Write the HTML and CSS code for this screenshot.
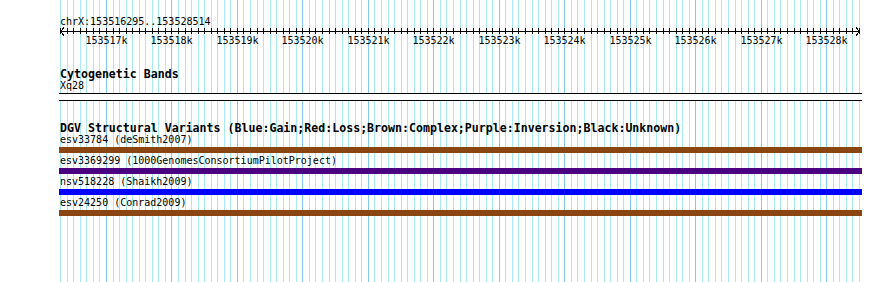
FILE: index.html
```html
<!DOCTYPE html>
<html lang="en">
<head>
  <meta charset="UTF-8">
  <title>chrX:153516295..153528514</title>
  <link rel="stylesheet" href="styles.css">
</head>
<body>
  <div class="panel">
    <svg class="grid" id="grid" width="890" height="282"></svg>

    <div class="track ruler">
      <div class="seg">chrX:153516295..153528514</div>
      <svg class="scale" id="scale" width="890" height="24"></svg>
    </div>

    <div class="track bands">
      <div class="title">Cytogenetic Bands</div>
      <div class="label">Xq28</div>
      <div class="band"></div>
    </div>

    <div class="track dgv">
      <div class="title">DGV Structural Variants (Blue:Gain;Red:Loss;Brown:Complex;Purple:Inversion;Black:Unknown)</div>
      <div class="feature">
        <div class="label">esv33784 (deSmith2007)</div>
        <div class="bar complex"></div>
      </div>
      <div class="feature">
        <div class="label">esv3369299 (1000GenomesConsortiumPilotProject)</div>
        <div class="bar inversion"></div>
      </div>
      <div class="feature">
        <div class="label">nsv518228 (Shaikh2009)</div>
        <div class="bar gain"></div>
      </div>
      <div class="feature">
        <div class="label">esv24250 (Conrad2009)</div>
        <div class="bar complex"></div>
      </div>
    </div>
  </div>

  <script>
    var start = 153516295, end = 153528514;
    var x0 = 59.8, k = 0.06548;
    var ns = 'http://www.w3.org/2000/svg';

    function px(p) {
      return Math.round(x0 + (p - start) * k) + 0.5;
    }

    function add(parent, tag, attrs, text) {
      var el = document.createElementNS(ns, tag);
      for (var a in attrs) el.setAttribute(a, attrs[a]);
      if (text) el.textContent = text;
      parent.appendChild(el);
      return el;
    }

    var grid = document.getElementById('grid');
    var scale = document.getElementById('scale');

    // grid lines every 100bp, darker every 1kb
    for (var p = 153516300; p <= end; p += 100) {
      var x = px(p);
      var major = p % 1000 === 0;
      add(grid, 'line', { x1: x, x2: x, y1: 0, y2: 282, 'class': major ? 'major' : 'minor' });
      add(scale, 'line', { x1: x, x2: x, y1: 1, y2: 7, 'class': 'tick' });
      if (major) {
        add(scale, 'text', { x: x, y: 17, 'class': 'ticklabel' }, (p / 1000) + 'k');
      }
    }

    add(scale, 'line', { x1: 60, x2: 860, y1: 4.5, y2: 4.5, 'class': 'axis' });
    add(scale, 'polyline', { points: '64,0.5 60.5,4.5 64,8.5', 'class': 'axis' });
    add(scale, 'polyline', { points: '856,0.5 859.5,4.5 856,8.5', 'class': 'axis' });
  </script>
</body>
</html>
```

FILE: styles.css
```css
body {
  margin: 0;
  background: #fff;
  color: #000;
  font-family: "DejaVu Sans Mono", monospace;
  font-size: 10px;
}
.panel {
  position: relative;
  width: 890px;
  height: 282px;
  overflow: hidden;
}
.grid {
  position: absolute;
  top: 0;
  left: 0;
}
.grid line {
  shape-rendering: crispEdges;
  stroke-width: 1;
}
.grid .minor {
  stroke: #a8eaf0;
}
.grid .major {
  stroke: #84c8f0;
}
.track {
  position: relative;
  padding-left: 60px;
}
.seg, .label {
  line-height: 12px;
  white-space: nowrap;
}
.title {
  font-weight: bold;
  font-size: 11.6px;
  line-height: 12px;
  white-space: nowrap;
}
.ruler {
  padding-top: 16px;
}
.ruler .seg {
  line-height: 11px;
}
.scale {
  display: block;
  margin-left: -60px;
}
.scale .tick, .scale .axis {
  stroke: #000;
  stroke-width: 1;
  fill: none;
  shape-rendering: crispEdges;
}
.scale .ticklabel {
  font-family: "DejaVu Sans Mono", monospace;
  font-size: 10px;
  text-anchor: middle;
  fill: #000;
}
.bands {
  margin-top: 17px;
}
.band {
  margin: 1px 0 0 -1px;
  width: 803px;
  height: 6px;
  border-top: 1px solid #000;
  border-bottom: 1px solid #000;
  background: #fff;
}
.dgv {
  margin-top: 21px;
}
.feature {
  padding-bottom: 2px;
}
.bar {
  margin: 1px 0 0 -1px;
  width: 803px;
  height: 6px;
}
.complex {
  background: #8b4513;
}
.inversion {
  background: #4b0082;
}
.gain {
  background: #0000ff;
}
```
